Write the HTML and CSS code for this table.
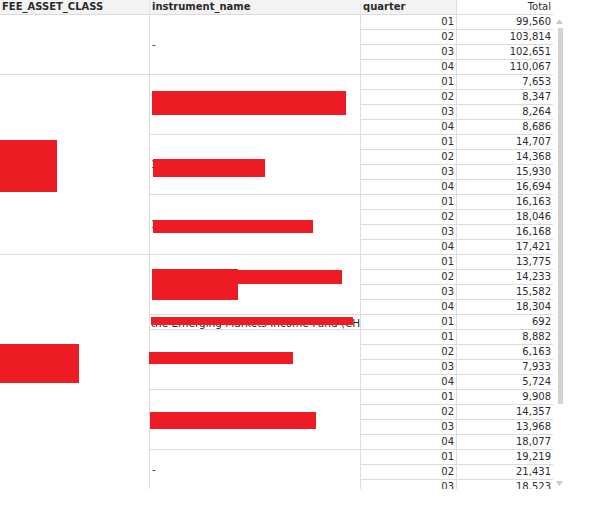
FILE: index.html
```html
<!DOCTYPE html>
<html>
<head>
<meta charset="utf-8">
<link rel="stylesheet" href="styles.css">
</head>
<body>
<div class="frame">
  <div class="table">
    <div class="head">
      <div class="h h1">FEE_ASSET_CLASS</div>
      <div class="h h2">instrument_name</div>
      <div class="h h3">quarter</div>
      <div class="h h4">Total</div>
    </div>

    <div class="group">
      <div class="cls"></div>
      <div class="subs">
        <div class="sub">
          <div class="name">-</div>
          <div class="rows">
            <div class="row"><span class="q">01</span><span class="t">99,560</span></div>
            <div class="row"><span class="q">02</span><span class="t">103,814</span></div>
            <div class="row"><span class="q">03</span><span class="t">102,651</span></div>
            <div class="row"><span class="q">04</span><span class="t">110,067</span></div>
          </div>
        </div>
      </div>
    </div>

    <div class="group">
      <div class="cls"><i class="redact rc1"></i></div>
      <div class="subs">
        <div class="sub">
          <div class="name"><i class="redact ra"></i></div>
          <div class="rows">
            <div class="row"><span class="q">01</span><span class="t">7,653</span></div>
            <div class="row"><span class="q">02</span><span class="t">8,347</span></div>
            <div class="row"><span class="q">03</span><span class="t">8,264</span></div>
            <div class="row"><span class="q">04</span><span class="t">8,686</span></div>
          </div>
        </div>
        <div class="sub">
          <div class="name peek">1<i class="redact rb"></i></div>
          <div class="rows">
            <div class="row"><span class="q">01</span><span class="t">14,707</span></div>
            <div class="row"><span class="q">02</span><span class="t">14,368</span></div>
            <div class="row"><span class="q">03</span><span class="t">15,930</span></div>
            <div class="row"><span class="q">04</span><span class="t">16,694</span></div>
          </div>
        </div>
        <div class="sub">
          <div class="name peek">1<i class="redact rc"></i></div>
          <div class="rows">
            <div class="row"><span class="q">01</span><span class="t">16,163</span></div>
            <div class="row"><span class="q">02</span><span class="t">18,046</span></div>
            <div class="row"><span class="q">03</span><span class="t">16,168</span></div>
            <div class="row"><span class="q">04</span><span class="t">17,421</span></div>
          </div>
        </div>
      </div>
    </div>

    <div class="group last">
      <div class="cls"><i class="redact rc2"></i></div>
      <div class="subs">
        <div class="sub">
          <div class="name"><i class="redact rd"></i><i class="redact re"></i></div>
          <div class="rows">
            <div class="row"><span class="q">01</span><span class="t">13,775</span></div>
            <div class="row"><span class="q">02</span><span class="t">14,233</span></div>
            <div class="row"><span class="q">03</span><span class="t">15,582</span></div>
            <div class="row"><span class="q">04</span><span class="t">18,304</span></div>
          </div>
        </div>
        <div class="sub">
          <div class="name single">the Emerging Markets Income Fund (CH<i class="redact rf"></i></div>
          <div class="rows">
            <div class="row"><span class="q">01</span><span class="t">692</span></div>
          </div>
        </div>
        <div class="sub">
          <div class="name"><i class="redact rg"></i></div>
          <div class="rows">
            <div class="row"><span class="q">01</span><span class="t">8,882</span></div>
            <div class="row"><span class="q">02</span><span class="t">6,163</span></div>
            <div class="row"><span class="q">03</span><span class="t">7,933</span></div>
            <div class="row"><span class="q">04</span><span class="t">5,724</span></div>
          </div>
        </div>
        <div class="sub">
          <div class="name"><i class="redact rh"></i></div>
          <div class="rows">
            <div class="row"><span class="q">01</span><span class="t">9,908</span></div>
            <div class="row"><span class="q">02</span><span class="t">14,357</span></div>
            <div class="row"><span class="q">03</span><span class="t">13,968</span></div>
            <div class="row"><span class="q">04</span><span class="t">18,077</span></div>
          </div>
        </div>
        <div class="sub">
          <div class="name cut">-</div>
          <div class="rows">
            <div class="row"><span class="q">01</span><span class="t">19,219</span></div>
            <div class="row"><span class="q">02</span><span class="t">21,431</span></div>
            <div class="row"><span class="q">03</span><span class="t">18,523</span></div>
          </div>
        </div>
      </div>
    </div>
  </div>

  <div class="scroll">
    <svg class="arrow" width="7" height="5" viewBox="0 0 7 5"><path d="M3.5 0 L7 5 L0 5 Z" fill="#c9c9c9"/></svg>
    <div class="thumb"></div>
    <svg class="arrow down" width="7" height="5" viewBox="0 0 7 5"><path d="M0 0 L7 0 L3.5 5 Z" fill="#c9c9c9"/></svg>
  </div>
</div>
</body>
</html>
```

FILE: styles.css
```css
* { box-sizing: border-box; }

html, body {
  margin: 0;
  padding: 0;
  background: #ffffff;
}

body {
  font-family: "DejaVu Sans", Verdana, sans-serif;
  font-size: 10px;
  color: #2b2b2b;
}

.frame {
  display: flex;
  height: 489px;
  overflow: hidden;
  width: 592px;
}

.table {
  width: 553px;
  flex: none;
  display: flex;
  flex-direction: column;
}

.head {
  display: flex;
  height: 15px;
  border-bottom: 1px solid #dcdcdc;
  flex: none;
}

.h {
  line-height: 14px;
  background: #f3f3f3;
  font-weight: bold;
  white-space: nowrap;
  overflow: hidden;
}

.h1 { width: 150px; padding-left: 2px; border-right: 1px solid #e6e6e6; }
.h2 { width: 211px; padding-left: 2px; border-right: 1px solid #e6e6e6; }
.h3 { width: 96px; padding-left: 2px; border-right: 1px solid #dcdcdc; }
.h4 {
  width: 96px;
  background: #ffffff;
  font-weight: normal;
  text-align: right;
  padding-right: 2px;
}

.group {
  display: flex;
  flex: none;
}

.cls {
  width: 150px;
  flex: none;
  position: relative;
  border-right: 1px solid #dcdcdc;
  border-bottom: 1px solid #dcdcdc;
}

.subs {
  display: flex;
  flex-direction: column;
}

.sub {
  display: flex;
}

.name {
  width: 211px;
  flex: none;
  position: relative;
  display: flex;
  align-items: center;
  padding-left: 2px;
  white-space: nowrap;
  overflow: visible;
  border-right: 1px solid #dcdcdc;
  border-bottom: 1px solid #dcdcdc;
}

.name.peek { padding-left: 1px; }
.name.single {
  padding-left: 1px;
  padding-top: 3px;
  line-height: 11px;
  font-size: 10.5px;
}
.name.cut { padding-bottom: 6px; border-bottom: none; }

.rows {
  display: flex;
  flex-direction: column;
}

.row {
  display: flex;
  height: 15px;
  line-height: 14px;
  border-bottom: 1px solid #dcdcdc;
}

.q {
  width: 96px;
  text-align: right;
  padding-right: 2px;
  border-right: 1px solid #dcdcdc;
}

.t {
  width: 96px;
  text-align: right;
  padding-right: 2px;
}

.redact {
  position: absolute;
  background: #ed1c24;
  display: block;
}

.rc1 { left: 0; top: 65px; width: 57px; height: 52px; }
.rc2 { left: 0; top: 89px; width: 79px; height: 39px; }
.ra { left: 2px; top: 16px; width: 194px; height: 24px; }
.rb { left: 3px; top: 24px; width: 112px; height: 18px; }
.rc { left: 3px; top: 25px; width: 160px; height: 13px; }
.rd { left: 2px; top: 15px; width: 190px; height: 14px; }
.re { left: 2px; top: 14px; width: 86px; height: 31px; }
.rf { left: 1px; top: 2px; width: 202px; height: 8px; }
.rg { left: -1px; top: 22px; width: 144px; height: 12px; }
.rh { left: 0; top: 22px; width: 166px; height: 17px; }

.scroll {
  width: 12px;
  flex: none;
  display: flex;
  flex-direction: column;
  padding: 19px 0 3px 3px;
}

.arrow { display: block; flex: none; }
.arrow.down { margin-top: auto; }

.thumb {
  margin-top: 4px;
  margin-left: 2px;
  width: 5px;
  height: 376px;
  background: #d3d3d3;
  flex: none;
}
```
